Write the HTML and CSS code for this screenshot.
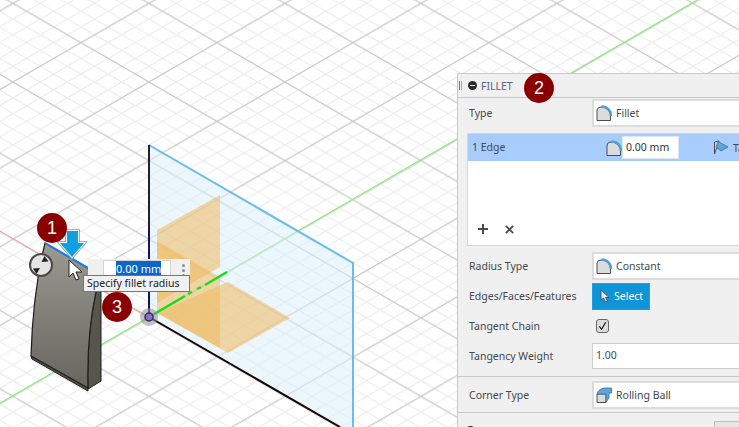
FILE: index.html
```html
<!DOCTYPE html>
<html lang="en">
<head>
<meta charset="utf-8">
<title>Fillet</title>
<link rel="stylesheet" href="styles.css">
</head>
<body>
<main class="stage">
  <svg class="scene" width="739" height="427" viewBox="0 0 739 427" xmlns="http://www.w3.org/2000/svg">
    <defs>
      <pattern id="grid" patternUnits="userSpaceOnUse" x="13" y="3.4" width="136" height="78.6">
        <path class="minor" d="M-108.8 0L27.2 78.6M-81.6 0L54.4 78.6M-54.4 0L81.6 78.6M-27.2 0L108.8 78.6M27.2 0L163.2 78.6M54.4 0L190.4 78.6M81.6 0L217.6 78.6M108.8 0L244.8 78.6"/>
        <path class="minor" d="M244.8 0L108.8 78.6M217.6 0L81.6 78.6M190.4 0L54.4 78.6M163.2 0L27.2 78.6M108.8 0L-27.2 78.6M81.6 0L-54.4 78.6M54.4 0L-81.6 78.6M27.2 0L-108.8 78.6"/>
        <path class="major" d="M0 0L136 78.6M-136 0L0 78.6M136 0L272 78.6M136 0L0 78.6M272 0L136 78.6M0 0L-136 78.6"/>
      </pattern>
      <linearGradient id="body" x1="0" y1="0" x2="0" y2="1">
        <stop offset="0" stop-color="#9a9992"/>
        <stop offset="1" stop-color="#66665f"/>
      </linearGradient>
    </defs>
    <rect width="739" height="427" fill="url(#grid)"/>
    <path class="axis-red" d="M0 231L149 317"/>
    <path class="axis-green" d="M0 403L149 317L697 0"/>

    <path class="plane" d="M149 145L353 263V427H340L149 317Z"/>
    <path class="plane-edge" d="M149 145L353 263V427"/>

    <path class="orange" d="M157 230L220 195V267L157 303Z"/>
    <path class="orange" d="M157 241L220 277V348L157 313Z"/>
    <path class="orange" d="M228 282L290 318L228 353L157 313Z"/>

    <path class="axis-black" d="M149 145V228"/>
    <path class="axis-navy" d="M149 228V317"/>
    <path class="axis-dark" d="M149 317L340 427"/>
    <path class="axis-thick" d="M149 317L185 296M188 294L192 292M197 289L201 287M205 285L227 272"/>

    <circle class="origin-halo" cx="149" cy="317" r="9"/>
    <circle class="origin" cx="149" cy="317" r="4"/>

    <path class="solid-side" d="M94 288L101 292V381L88 389C87 350 90 320 96 292Z"/>
    <path class="solid-lip" d="M31 356L88 388V391L32 359Z"/>
    <path class="solid-front" d="M45 243L88 268L96 292C90 320 87 350 88 388L31 356C32 320 36 280 45 243Z"/>
    <path class="fillet-edge" d="M45 243L88 268"/>

    <path class="arrow-ring" d="M67 231H78V243H84L72 257L60 243H67Z"/>
    <path class="arrow-halo" d="M67 231H78V243H84L72 257L60 243H67Z"/>
    <path class="arrow" d="M67 231H78V243H84L72 257L60 243H67Z"/>

    <circle class="flip" cx="41" cy="265" r="11"/>
    <path class="flip-mark" d="M44.500 256L48.500 261.500L41.500 262ZM36.500 274L33 268.500L40 268Z"/>
    <path class="cursor" d="M69 260V277L73 273L76 280L79 279L76 272H82Z"/>
  </svg>

  <div class="mini-box">
    <span class="mini-grip"></span>
    <span class="mini-input"><span class="mini-selected">0.00 mm</span></span>
    <span class="mini-dots"></span>
  </div>
  <div class="tooltip">Specify fillet radius</div>

  <span class="callout callout-one">1</span>
  <span class="callout callout-three">3</span>

  <section class="panel">
    <header class="panel-head">
      <span class="grip"></span>
      <span class="minus"></span>
      <span class="panel-title">FILLET</span>
    </header>

    <div class="row row-type">
      <span class="label">Type</span>
      <div class="field select">
        <svg class="icon" viewBox="0 0 16 16" xmlns="http://www.w3.org/2000/svg"><path class="i-body" d="M1 15.500V5Q1.500 2 5 2C10 2 14.500 6 14.500 11V15.500Z"/><path class="i-arc" d="M5.500 1.500C11 1.500 15 5.500 15 11"/></svg>
        <span>Fillet</span>
      </div>
    </div>

    <div class="list">
      <div class="list-row">
        <span class="list-name">1 Edge</span>
        <svg class="icon" viewBox="0 0 16 16" xmlns="http://www.w3.org/2000/svg"><path class="i-body" d="M1 15.500V5Q1.500 2 5 2C10 2 14.500 6 14.500 11V15.500Z"/><path class="i-arc" d="M5.500 1.500C11 1.500 15 5.500 15 11"/></svg>
        <span class="list-input">0.00 mm</span>
        <svg class="icon list-tan" viewBox="0 0 16 16" xmlns="http://www.w3.org/2000/svg"><path class="i-body" d="M1.500 2L6 1L1.500 14Z"/><path class="i-blue" d="M5 1.500L15 7L8 11L3 7Z"/></svg>
        <span>Tangent</span>
      </div>
      <div class="list-actions">
        <svg class="tool" viewBox="0 0 12 12" xmlns="http://www.w3.org/2000/svg"><path d="M6 1V11M1 6H11"/></svg>
        <svg class="tool tool-x" viewBox="0 0 12 12" xmlns="http://www.w3.org/2000/svg"><path d="M2 2L10 10M10 2L2 10"/></svg>
      </div>
    </div>

    <div class="row row-radius">
      <span class="label">Radius Type</span>
      <div class="field select">
        <svg class="icon" viewBox="0 0 16 16" xmlns="http://www.w3.org/2000/svg"><path class="i-body" d="M1 15.500V5Q1.500 2 5 2C10 2 14.500 6 14.500 11V15.500Z"/><path class="i-arc" d="M5.500 1.500C11 1.500 15 5.500 15 11"/></svg>
        <span>Constant</span>
      </div>
    </div>

    <div class="row row-edges">
      <span class="label">Edges/Faces/Features</span>
      <button class="select-btn" type="button">
        <svg class="btn-cursor" viewBox="0 0 10 14" xmlns="http://www.w3.org/2000/svg"><path d="M1 1V11L3.500 9L5.500 13L7.500 12L5.500 8.500H9Z"/></svg>
        Select
      </button>
    </div>

    <div class="row row-chain">
      <span class="label">Tangent Chain</span>
      <span class="check">
        <svg viewBox="0 0 12 12" xmlns="http://www.w3.org/2000/svg"><path d="M2.500 6.500L5 9.500L9.500 2"/></svg>
      </span>
    </div>

    <div class="row row-weight">
      <span class="label">Tangency Weight</span>
      <div class="field value">1.00</div>
    </div>

    <div class="row row-corner">
      <span class="label">Corner Type</span>
      <div class="field select">
        <svg class="icon" viewBox="0 0 16 16" xmlns="http://www.w3.org/2000/svg"><path class="i-body" d="M1 7H10V15.500H1Z"/><path class="i-blue" d="M1 7C2 3 5 2 8 1H15.500V6L13 6V11L10 15V7Z"/></svg>
        <span>Rolling Ball</span>
      </div>
    </div>

    <footer class="panel-foot">
      <span class="help"></span>
      <span class="foot-btn"></span>
    </footer>
  </section>

  <span class="callout callout-two">2</span>
</main>
</body>
</html>
```

FILE: styles.css
```css
* { box-sizing: border-box; }
html, body { margin: 0; padding: 0; }
body { width: 739px; height: 427px; overflow: hidden; background: #fff; font-family: "Noto Sans", "Liberation Sans", sans-serif; }

.stage { position: relative; width: 739px; height: 427px; overflow: hidden; background: #fff; }
.scene { position: absolute; left: 0; top: 0; display: block; }

.minor { fill: none; stroke: #ececec; stroke-width: 1.200; }
.major { fill: none; stroke: #c8c8c8; stroke-width: 1.200; }
.axis-red { fill: none; stroke: #f4a0a0; stroke-width: 1; }
.axis-green { fill: none; stroke: #78f260; stroke-width: 1; }
.plane { fill: #d9eefb; fill-opacity: .5; }
.plane-edge { fill: none; stroke: #6bbce9; stroke-width: 2; }
.orange { fill: #f0ba5c; fill-opacity: .55; }
.axis-black { fill: none; stroke: #222; stroke-width: 2; }
.axis-navy { fill: none; stroke: #14145e; stroke-width: 2; }
.axis-dark { fill: none; stroke: #1a0505; stroke-width: 2; }
.axis-thick { fill: none; stroke: #18e010; stroke-width: 2.500; }
.origin-halo { fill: #8f8f8f; fill-opacity: .55; }
.origin { fill: #8a72c0; stroke: #3a2a60; stroke-width: 1.500; }

.solid-side { fill: #57564e; stroke: #1c1c1c; stroke-width: 1; }
.solid-lip { fill: #55554e; stroke: #1c1c1c; stroke-width: 1; }
.solid-front { fill: url(#body); stroke: #1d1d1b; stroke-width: 1.200; }
.fillet-edge { fill: none; stroke: #1a7fe0; stroke-width: 2; }
.arrow-ring { fill: none; stroke: #6d9cb8; stroke-width: 3.500; }
.arrow-halo { fill: none; stroke: #f2f8fc; stroke-width: 2; }
.arrow { fill: #109fdf; }
.flip { fill: #e4e4e4; stroke: #4a4a4a; stroke-width: 2; }
.flip-mark { fill: #222; }
.cursor { fill: #fff; stroke: #222; stroke-width: 1; }

.mini-box { position: absolute; left: 88px; top: 259px; width: 102px; height: 23px; display: flex; align-items: flex-start; background: #f0f0f0; }
.mini-grip { width: 15px; height: 100%; }
.mini-input { display: block; width: 68px; height: 17px; margin-top: 1px; padding: 0 0 0 12px; background: #fff; border: 1px solid #d4d4d4; font-size: 11px; line-height: 15px; color: #222; }
.mini-selected { background: #0a66c8; color: #fff; }
.mini-dots { width: 3px; height: 3px; margin: 5px 0 0 11px; background: #8a8a8a; box-shadow: 0 5px 0 #8a8a8a, 0 10px 0 #8a8a8a; border-radius: 50%; }

.tooltip { position: absolute; left: 83px; top: 275px; width: 107px; height: 17px; background: #f1f1f1; border: 1px solid #767676; font-size: 10.500px; line-height: 15px; padding-left: 3px; color: #222; white-space: nowrap; }

.callout { position: absolute; width: 30px; height: 30px; border-radius: 50%; background: #8a0000; color: #fff; font-family: "Liberation Sans", sans-serif; font-size: 18px; line-height: 30px; text-align: center; }
.callout-one { left: 37px; top: 213px; }
.callout-two { left: 524px; top: 73px; }
.callout-three { left: 102px; top: 292px; }

.panel { position: absolute; left: 457px; top: 73px; width: 320px; height: 380px; background: #f0f0f0; border: 1px solid #c9c9c9; font-size: 10.500px; line-height: 14px; color: #43484f; }
.panel-head { display: flex; align-items: center; height: 24px; border-bottom: 1px solid #c9c9c9; padding-left: 1px; }
.grip { width: 3px; height: 9px; border-left: 1px solid #777; border-right: 1px solid #aaa; }
.minus { position: relative; width: 9px; height: 9px; margin-left: 6px; border-radius: 50%; background: #2a2a2a; }
.minus::after { content: ""; position: absolute; left: 2px; top: 4px; width: 5px; height: 1px; background: #eee; }
.panel-title { margin-left: 4px; color: #5a6680; font-size: 10.500px; }

.row { display: flex; align-items: center; padding-left: 11px; }
.label { width: 123px; flex: none; white-space: nowrap; padding-bottom: 1px; }
.row-type { height: 30px; margin-bottom: 5px; }
.row-radius { height: 28px; margin-top: 6px; }
.row-edges { height: 28px; margin-top: 2px; }
.row-chain { height: 20px; margin-top: 6px; }
.row-weight { height: 26px; margin-top: 7px; }
.row-corner { height: 36px; margin-top: 7px; padding-top: 1px; border-top: 1px solid #c9c9c9; }

.field { flex: none; width: 200px; background: #fff; }
.select { display: flex; align-items: center; height: 28px; padding-left: 2px; gap: 4px; border: 1px solid #dcdcdc; border-width: 2px 0 2px 2px; }
.value { height: 26px; padding-left: 3px; line-height: 22px; border: 1px solid #cfcfcf; }
.icon { flex: none; width: 16px; height: 16px; display: block; }
.i-body { fill: #dcdcdc; stroke: #4d4d4d; stroke-width: 1; }
.i-arc { fill: none; stroke: #4f9fd8; stroke-width: 2.500; }
.i-blue { fill: #5ba7dc; stroke: #3c6f94; stroke-width: .8; }

.list { margin-left: 9px; width: 300px; height: 113px; background: #fff; border: 1px solid #d5d5d5; display: flex; flex-direction: column; justify-content: space-between; }
.list-row { display: flex; align-items: center; height: 27px; background: #a8cdfd; padding-left: 4px; }
.list-name { width: 134px; flex: none; padding-bottom: 1px; }
.list-input { flex: none; width: 57px; height: 23px; padding-left: 3px; line-height: 20px; background: #fff; border: 1px solid #dce6f2; color: #333; }
.list-tan { margin-left: 34px; margin-right: 4px; }
.list-actions { display: flex; align-items: center; gap: 15px; height: 26px; padding: 0 0 6px 9px; }
.tool { width: 12px; height: 12px; fill: none; stroke: #4a4a4a; stroke-width: 2; }
.tool-x { width: 11px; height: 11px; }

.select-btn { display: flex; align-items: center; gap: 4px; width: 58px; height: 27px; padding: 0 0 0 7px; border: 1px solid #1f9ee0; background: #0f94d8; color: #fff; font: inherit; }
.btn-cursor { width: 10px; height: 14px; fill: #e6e6e6; stroke: #444; stroke-width: .8; }

.check { display: flex; width: 13px; height: 14px; margin-left: 4px; background: #dcdcdc; border: 1px solid #666; border-radius: 3px; }
.check svg { width: 11px; height: 12px; fill: none; stroke: #111; stroke-width: 1.200; }

.panel-foot { position: relative; height: 20px; border-top: 1px solid #c9c9c9; }
.help { position: absolute; left: 7px; top: 13px; width: 11px; height: 11px; border-radius: 50%; background: #222; }
.foot-btn { position: absolute; left: 256px; top: 8px; width: 60px; height: 20px; background: #e6e6e6; border: 1px solid #bdbdbd; }
```
